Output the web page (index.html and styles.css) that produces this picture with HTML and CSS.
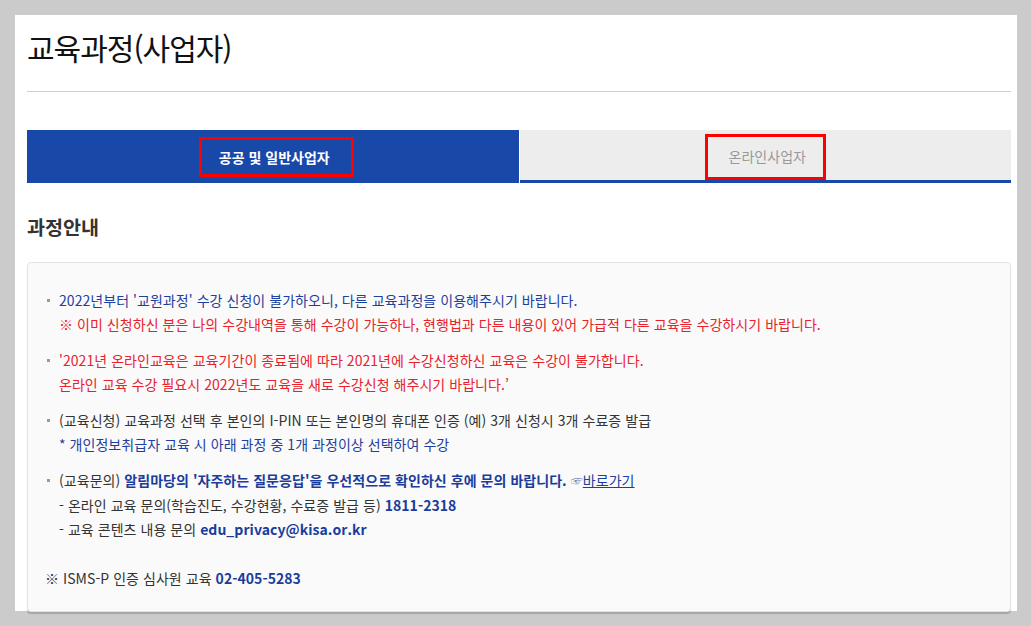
FILE: index.html
```html
<!DOCTYPE html>
<html lang="ko">
<head>
<meta charset="utf-8">
<title>교육과정(사업자)</title>
<link rel="stylesheet" href="styles.css">
</head>
<body>
<div class="page">
  <h1 class="title">교육과정(사업자)</h1>
  <div class="tabs">
    <div class="tab active"><span class="mark mark-a">공공 및 일반사업자</span></div>
    <div class="tab"><span class="mark mark-b">온라인사업자</span></div>
  </div>
  <h2 class="sub">과정안내</h2>
  <div class="info">
    <ul class="list">
      <li>
        <p class="blue">2022년부터 '교원과정' 수강 신청이 불가하오니, 다른 교육과정을 이용해주시기 바랍니다.</p>
        <p class="red">※ 이미 신청하신 분은 나의 수강내역을 통해 수강이 가능하나, 현행법과 다른 내용이 있어 가급적 다른 교육을 수강하시기 바랍니다.</p>
      </li>
      <li>
        <p class="red">'2021년 온라인교육은 교육기간이 종료됨에 따라 2021년에 수강신청하신 교육은 수강이 불가합니다.</p>
        <p class="red">온라인 교육 수강 필요시 2022년도 교육을 새로 수강신청 해주시기 바랍니다.’</p>
      </li>
      <li>
        <p>(교육신청) 교육과정 선택 후 본인의 I-PIN 또는 본인명의 휴대폰 인증 (예) 3개 신청시 3개 수료증 발급</p>
        <p class="blue">* 개인정보취급자 교육 시 아래 과정 중 1개 과정이상 선택하여 수강</p>
      </li>
      <li>
        <p>(교육문의) <b class="strong">알림마당의 '자주하는 질문응답'을 우선적으로 확인하신 후에 문의 바랍니다.</b> <a class="go" href="#"><span class="hand">☞</span><u>바로가기</u></a></p>
        <p>- 온라인 교육 문의(학습진도, 수강현황, 수료증 발급 등) <b class="strong">1811-2318</b></p>
        <p>- 교육 콘텐츠 내용 문의 <b class="strong">edu_privacy@kisa.or.kr</b></p>
      </li>
    </ul>
    <p class="isms">※ ISMS-P 인증 심사원 교육 <b class="strong">02-405-5283</b></p>
  </div>
</div>
</body>
</html>
```
FILE: styles.css
```css
* { box-sizing: border-box; }
html, body { margin: 0; padding: 0; }
body {
  background: #cbcbcb;
  font-family: "Noto Sans CJK KR", "Noto Sans", sans-serif;
  color: #333;
  height: 626px;
  overflow: hidden;
}
.page {
  margin: 15px 0 0 15px;
  width: 1002px;
  height: 596px;
  background: #fff;
  padding: 0 6px 0 12px;
}
.title {
  margin: 0;
  padding-top: 12px;
  height: 77px;
  font-size: 30px;
  font-weight: 400;
  line-height: 40px;
  color: #111;
  letter-spacing: -1px;
  border-bottom: 1px solid #cfcfcf;
}
.tabs {
  margin-top: 38px;
  display: flex;
  height: 53px;
}
.tab {
  flex: 1;
  display: flex;
  align-items: center;
  justify-content: center;
  background: #ededed;
  color: #999;
  font-size: 14px;
  border-bottom: 3px solid #1848a8;
  margin-left: 1px;
}
.tab.active {
  background: #1848a8;
  color: #fff;
  font-weight: 700;
  border-bottom: none;
  margin-left: 0;
}
.mark {
  border: 3px solid #f00;
  line-height: 20px;
}
.mark-a {
  padding: 7px 21px 7px 17px;
  margin-left: 7px;
}
.tab .mark-b {
  padding: 9px 17px 11px 21px;
  margin-top: 3px;
}
.sub {
  margin: 30px 0 0 0;
  font-size: 19.6px;
  line-height: 28px;
  font-weight: 700;
  color: #333;
}
.info {
  margin-top: 21px;
  background: #fafafa;
  border: 1px solid #e3e3e3;
  border-radius: 4px;
  box-shadow: 0 2px 1px rgba(0,0,0,0.18);
  padding: 25px 18px 21px 17px;
  font-size: 14px;
  line-height: 24px;
  letter-spacing: 0.05px;
}
.list {
  list-style: none;
  margin: 0;
  padding: 0;
}
.list li {
  position: relative;
  padding-left: 14px;
  margin-bottom: 12px;
}
.list li:last-child { margin-bottom: 0; }
.list li::before {
  content: "";
  position: absolute;
  left: 2px;
  top: 11px;
  width: 3px;
  height: 3px;
  background: #9a9a9a;
}
.list p { margin: 0; }
.blue { color: #1d3f9e; }
.red { color: #e8222a; }
.strong { color: #1a3d9c; font-weight: 700; }
.go { color: #1d3f9e; text-decoration: none; }
.go u { text-decoration: underline; }
.hand { font-size: 12px; color: #7080b8; }
.isms { margin: 25px 0 0 0; }
```
